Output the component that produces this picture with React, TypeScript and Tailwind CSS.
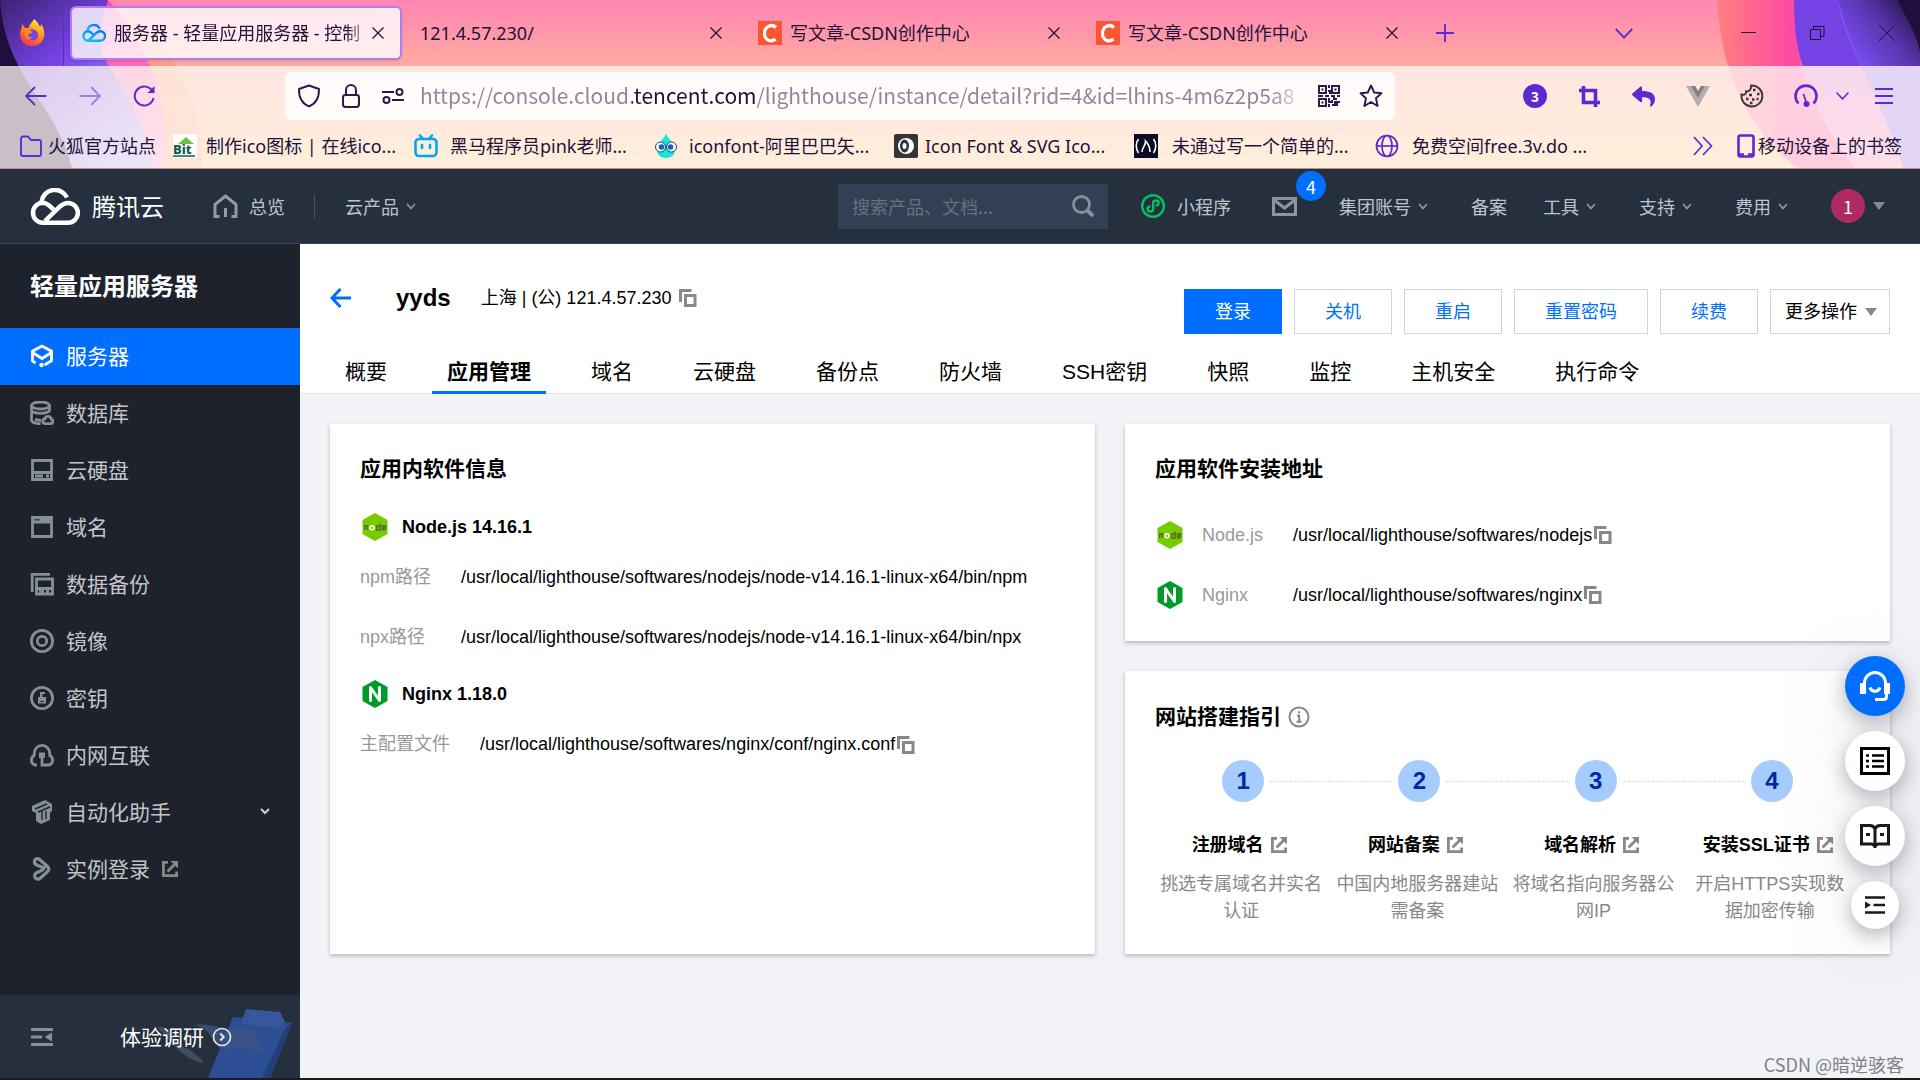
import { FaReply } from 'react-icons/fa';

const tabs = [
    { title: "121.4.57.230/", icon: false },
    { title: "写文章-CSDN创作中心", icon: true },
    { title: "写文章-CSDN创作中心", icon: true },
];

const headerMenus = [
    { name: "集团账号", arrow: true },
    { name: "备案", arrow: false },
    { name: "工具", arrow: true },
    { name: "支持", arrow: true },
    { name: "费用", arrow: true },
];

const detailTabs = ["概要", "应用管理", "域名", "云硬盘", "备份点", "防火墙", "SSH密钥", "快照", "监控", "主机安全", "执行命令"];

const steps = [
    { title: "注册域名", text: "挑选专属域名并实名认证" },
    { title: "网站备案", text: "中国内地服务器建站需备案" },
    { title: "域名解析", text: "将域名指向服务器公网IP" },
    { title: "安装SSL证书", text: "开启HTTPS实现数据加密传输" },
];

function CloseIcon() {
    return (
        <svg width="12" height="12" viewBox="0 0 12 12" fill="none" stroke="currentColor" strokeWidth="1.3">
            <path d="M.5.5l11 11M11.5.5l-11 11" />
        </svg>
    );
}

function Chevron() {
    return (
        <svg width="10" height="7" viewBox="0 0 10 7" fill="none" stroke="#8b9199" strokeWidth="1.7">
            <path d="M1 1l4 4.4L9 1" />
        </svg>
    );
}

function CloudLogo({ width, height, stroke, strokeWidth }: { width: number; height: number; stroke: string; strokeWidth: number }) {
    return (
        <svg width={width} height={height} viewBox="0 0 50 37" fill="none" stroke={stroke} strokeWidth={strokeWidth}>
            <defs>
                <linearGradient id="cloudBlue" x1="0" y1="1" x2="1" y2="0">
                    <stop offset="0" stopColor="#00d3ff" />
                    <stop offset=".6" stopColor="#0a93ff" />
                    <stop offset="1" stopColor="#006eff" />
                </linearGradient>
            </defs>
            <path d="M11.500 13.500A13.500 13.500 0 0 1 37 9.500" />
            <path d="M23.500 21.500C19.500 17.500 17 14.800 12 14.800a10 10 0 0 0 0 19.900h26a9.900 9.900 0 0 0 0-19.800c-3.800 0-6 1.600-8.500 4L15 33" />
        </svg>
    );
}

function CopyButton() {
    return (
        <button aria-label="复制" className="shrink-0">
            <svg width="18" height="18" viewBox="0 0 18 18" fill="none" stroke="#888" strokeWidth="3">
                <path d="M1.500 13V1.500H12.500" />
                <path d="M6.500 6.500h9.500v10H6.500z" />
            </svg>
        </button>
    );
}

function LinkOutIcon() {
    return (
        <svg width="16" height="16" viewBox="0 0 16 16" fill="none" stroke="#888" strokeWidth="2.800">
            <path d="M6 1.400H1.400v13.200h13.200V10.500" />
            <path d="M5.500 10.500L13 3" />
            <path d="M8.500 0H16v7.500z" fill="#888" stroke="none" />
        </svg>
    );
}

function NodeIcon() {
    return (
        <svg width="26" height="28" viewBox="0 0 26 28">
            <path d="M13 0l12.500 7v14L13 28 .5 21V7z" fill="#7c0" />
            <g fill="none" strokeWidth="1.500">
                <path d="M2.800 17v-4.200h2.700V17" stroke="#56682f" />
                <circle cx="10" cy="14.700" r="2" stroke="#fff" />
                <path d="M18 10.500V17h-3.400v-4H18M23.500 16.700h-3v-3.900h3V15h-3" stroke="#56682f" />
            </g>
        </svg>
    );
}

function NginxIcon() {
    return (
        <svg width="26" height="28" viewBox="0 0 26 28">
            <path d="M13 0l12.500 7v14L13 28 .5 21V7z" fill="#009a29" />
            <path d="M8.500 20.500v-13L17.500 20.500v-13" fill="none" stroke="#fff" strokeWidth="3" strokeLinecap="round" strokeLinejoin="round" />
        </svg>
    );
}

const gray = "#868e96";

const sideItems = [
    {
        name: "服务器",
        active: true,
        icon: (
            <g stroke="#fff" strokeWidth="2.800">
                <path d="M5.500 19L2.500 17V7.200L12 2l9.500 5.200v9.600L14.500 21" />
                <path d="M2.500 8.500l9.500 6 9.500-6" />
                <circle cx="11.500" cy="21" r="2.200" fill="#fff" stroke="none" />
            </g>
        ),
    },
    {
        name: "数据库",
        icon: (
            <g>
                <ellipse cx="10.500" cy="4.500" rx="9" ry="3.500" />
                <path d="M1.500 5v4c0 2 4 3.300 9 3.300s9-1.300 9-3.300V5" />
                <path d="M1.500 11v8c0 2 3.500 3.500 9 3.700M5 18.500l6 1" />
                <path d="M15 22.700h6c2.500-.5 2.500-4 .3-4.600-.8-3.600-5.600-3.600-6.300-.4-3 .6-3 4.600 0 5z" />
            </g>
        ),
    },
    { name: "云硬盘", icon: <path d="M2.500 2.500h19v19h-19zM2.500 14.500h19M5 18h8M16 18h3" /> },
    { name: "域名", icon: <path d="M2.500 2.500h19v19h-19zM2.500 5.500h2m2 0h1m2 0h12M2.500 7h19" /> },
    { name: "数据备份", icon: <path d="M2.200 20V2.300H20M6.500 7h16v15h-16zM6.500 16.500h16M9 19.500h5m2 0h3" /> },
    {
        name: "镜像",
        icon: (
            <g>
                <circle cx="12" cy="12" r="10.600" />
                <circle cx="12" cy="12" r="4.700" />
            </g>
        ),
    },
    {
        name: "密钥",
        icon: (
            <g>
                <circle cx="12" cy="12" r="10.600" />
                <path d="M8 11h8v6.500H8zM10 6h5v2h-2.500v4H10z" fill={gray} stroke="none" />
                <path d="M10.500 15.500h3" stroke="#1e222d" strokeWidth="1.200" />
            </g>
        ),
    },
    {
        name: "内网互联",
        icon: (
            <g>
                <path d="M7 22H5.500C1 21.500-.2 15 4.200 12.500 3 -1 21-1 19.800 12.500 24.200 15 23 21.500 18.500 22H12v-7" />
                <path d="M9 9.500h6v5.500H9z" fill={gray} stroke="none" />
            </g>
        ),
    },
    {
        name: "自动化助手",
        arrow: true,
        icon: (
            <g>
                <path d="M2 6L15 0l7 4v7l-2 1.500V20l-9 4-5-3v-8l-4-2z" fill={gray} stroke="none" />
                <path d="M5 9l12-5M8 12l12-5M12 11v9M16 11v8" stroke="#1e222d" strokeWidth="1.400" />
            </g>
        ),
    },
    {
        name: "实例登录",
        out: true,
        icon: (
            <path
                d="M15.500 11.500L8 8.500C2.500 7 4 0 9 2l8.500 7.500c2 2 1.500 4-.5 5.500l-6.500 6c-4 3.500-8-2-4.500-5l7.500-3.500"
                strokeWidth="3.200"
            />
        ),
    },
];

function BrowserBackdrop() {
    return (
        <div className="absolute inset-0 overflow-hidden bg-linear-to-b from-[#ff85b2] via-[#ffaaa0] via-40% to-[#ffcf90]">
            <svg className="absolute left-0 top-0" width="220" height="168" viewBox="0 0 220 168">
                <defs>
                    <linearGradient id="violetLeft" x1="0" y1="0" x2=".7" y2="1">
                        <stop offset="0" stopColor="#3b2370" />
                        <stop offset=".4" stopColor="#7542e5" />
                        <stop offset="1" stopColor="#b0a0ff" />
                    </linearGradient>
                    <linearGradient id="magentaLeft" x1="0" y1="0" x2="0" y2="1">
                        <stop offset="0" stopColor="#ff4aa2" />
                        <stop offset="1" stopColor="#ff9ad8" />
                    </linearGradient>
                </defs>
                <path d="M105 0c60 30 98 90 97 168H0V0z" fill="#ff9a70" opacity=".7" />
                <path d="M108 0c45 50 63 110 56 168H0V0z" fill="url(#magentaLeft)" />
                <path d="M58 0h50c-6 20-8 30-6 55 20 30 45 70 52 113H0V0z" fill="url(#violetLeft)" />
                <path d="M0 0c6 80 55 100 72 168H0z" fill="#1f0f3c" />
            </svg>
            <svg className="absolute right-0 top-0" width="260" height="168" viewBox="0 0 260 168">
                <defs>
                    <linearGradient id="magentaRight" x1="0" y1="0" x2=".6" y2="0">
                        <stop offset="0" stopColor="#ff7f80" />
                        <stop offset=".6" stopColor="#ff4aa2" />
                    </linearGradient>
                    <linearGradient id="peachFade" x1="0" y1="0" x2="0" y2="1">
                        <stop offset="0" stopColor="#c45ae8" stopOpacity=".9" />
                        <stop offset="1" stopColor="#ff8fc8" />
                    </linearGradient>
                    <linearGradient id="violetRight" x1=".1" y1=".7" x2="1" y2=".1">
                        <stop offset="0" stopColor="#7a4cf0" />
                        <stop offset=".5" stopColor="#5a35ad" />
                        <stop offset="1" stopColor="#20103d" />
                    </linearGradient>
                </defs>
                <path d="M57 0c4 60 20 120 80 168h123V0z" fill="url(#magentaRight)" />
                <path d="M134 0c0 70 20 110 60 168h66V0z" fill="url(#peachFade)" />
                <path d="M134 0c0 30 3 50 9 66h58L178 0z" fill="#7542e5" />
                <path d="M178 0c8 50 50 110 65 168h17V0z" fill="#8a66ff" />
                <path d="M178 0c6 24 14 45 23 66h59V0z" fill="url(#violetRight)" />
                <path d="M238 0c8 20 18 30 22 52V0z" fill="#1f0f3c" />
            </svg>
        </div>
    );
}

function TabStrip() {
    return (
        <div className="relative flex h-[66px] items-center text-lg text-[#20123a]">
            <div className="flex h-full w-16 shrink-0 items-center justify-center border-r border-[#5a30b0]">
                <svg width="26" height="28" viewBox="0 0 26 28">
                    <defs>
                        <linearGradient id="foxFire" x1=".8" y1="0" x2=".3" y2="1">
                            <stop offset="0" stopColor="#fff44f" />
                            <stop offset=".45" stopColor="#ff980e" />
                            <stop offset="1" stopColor="#ff2d55" />
                        </linearGradient>
                    </defs>
                    <path d="M15 0c4 3 5 6 6 8 1-1 1-2 1-3 6 8 4 22-9 22C4 27-1 19 2 10c1-1 1-3 1-5 1 1 2 2 3 4l4 0c0-4 3-5 5-9z" fill="url(#foxFire)" />
                    <path d="M9 12c4-3 10-1 10 4s-5 7-9 4c-3-2-2-5-1-8z" fill="#7542e5" />
                    <path d="M5 12c4-3 7 0 9 1-2 2-4 1-5 3 0 2 3 3 5 2-3 4-9 2-9-6z" fill="#ff8a16" />
                </svg>
            </div>
            <div className="ml-1.5 flex h-[54px] w-[332px] shrink-0 items-center rounded-md border-2 border-[#b07cf5] bg-white/80 px-2.5 shadow">
                <CloudLogo width={24} height={18} stroke="url(#cloudBlue)" strokeWidth={5} />
                <span className="ml-2 flex-1 whitespace-nowrap mask-r-from-90%">服务器 - 轻量应用服务器 - 控制</span>
                <button aria-label="关闭标签页" className="mr-1.5"><CloseIcon /></button>
            </div>
            {tabs.map((tab, index) => (
                <div key={index} className="ml-1.5 flex w-[332px] shrink-0 items-center px-3">
                    {tab.icon && (
                        <svg className="mr-2" width="24" height="24" viewBox="0 0 24 24">
                            <path d="M0 0h24v24H0z" fill="#fc5531" />
                            <path d="M18 6.500C13 2 6.500 6 6.500 12.500S13 22 17.500 18" fill="none" stroke="#fff" strokeWidth="3.200" />
                        </svg>
                    )}
                    <span className="flex-1 whitespace-nowrap">{tab.title}</span>
                    <button aria-label="关闭标签页" className="mr-1.5"><CloseIcon /></button>
                </div>
            ))}
            <button aria-label="新标签页" className="ml-5">
                <svg width="18" height="18" viewBox="0 0 18 18" stroke="#5b2ad0" strokeWidth="1.800"><path d="M9 0v18M0 9h18" /></svg>
            </button>
            <div className="ml-auto flex items-center pr-[25px]">
                <button aria-label="列出标签页" className="mr-[108px]">
                    <svg width="18" height="11" viewBox="0 0 18 11" fill="none" stroke="#5b2ad0" strokeWidth="1.800"><path d="M.7 1L9 9.500 17.300 1" /></svg>
                </button>
                <button aria-label="最小化" className="mr-[54px]">
                    <svg width="15" height="16" viewBox="0 0 15 16" stroke="currentColor"><path d="M0 7.500h15" /></svg>
                </button>
                <button aria-label="还原" className="mr-[54px]">
                    <svg width="15" height="16" viewBox="0 0 15 16" fill="none" stroke="currentColor"><path d="M.5 4.500h10v10H.5zM3.500 4V1.500h10.500v10h-3" /></svg>
                </button>
                <button aria-label="关闭">
                    <svg width="16" height="16" viewBox="0 0 16 16" stroke="currentColor"><path d="M0 0l16 16M16 0L0 16" /></svg>
                </button>
            </div>
        </div>
    );
}

function Toolbar() {
    return (
        <div className="flex h-[60px] items-center text-[#5b2ad0]">
            <div className="flex w-[285px] shrink-0 items-center gap-8 pl-[25px]">
                <button aria-label="后退">
                    <svg width="22" height="20" viewBox="0 0 22 20" fill="none" stroke="currentColor" strokeWidth="1.900"><path d="M21.500 10H1.500M10 1L1 10l9 9" /></svg>
                </button>
                <button aria-label="前进" className="opacity-50">
                    <svg width="22" height="20" viewBox="0 0 22 20" fill="none" stroke="currentColor" strokeWidth="1.900"><path d="M.5 10h20M12 1l9 9-9 9" /></svg>
                </button>
                <button aria-label="刷新">
                    <svg width="23" height="22" viewBox="0 0 23 22" fill="none" stroke="currentColor" strokeWidth="2"><path d="M20.500 13A9.500 9.500 0 1 1 19 5.500" /><path d="M21.500 1v7h-7z" fill="currentColor" stroke="none" /></svg>
                </button>
            </div>
            <div className="flex h-12 w-[1110px] items-center rounded-md bg-white/85 px-3 text-[#2b1a4a]">
                <svg width="24" height="24" viewBox="0 0 24 24" fill="none" stroke="currentColor" strokeWidth="1.900"><path d="M12 1.500l10 3.500c.3 8-3 14.500-10 17.500C5 19.500 1.700 13 2 5z" strokeLinejoin="round" /></svg>
                <svg className="ml-[21px]" width="18" height="24" viewBox="0 0 18 24" fill="none" stroke="currentColor" strokeWidth="2"><rect x="1" y="11" width="16" height="12" rx="2.500" /><path d="M4 11V6a5 5 0 0 1 10 0v5" /></svg>
                <svg className="ml-[21px]" width="24" height="18" viewBox="0 0 24 18" fill="none" stroke="currentColor" strokeWidth="2"><path d="M1 5h12M11 13h12" /><circle cx="18.500" cy="5" r="3" /><circle cx="5.500" cy="13" r="3" /></svg>
                <input
                    aria-label="地址栏"
                    readOnly
                    value="https://console.cloud.tencent.com/lighthouse/instance/detail?rid=4&id=lhins-4m6z2p5a8"
                    className="ml-[15px] w-[888px] bg-[linear-gradient(90deg,#8f859e_212px,#20123a_212px,#20123a_336px,#8f859e_336px,#8f859e_850px,transparent_888px)] bg-clip-text pb-0.5 text-[21px] leading-8 text-transparent outline-none"
                />
                <svg className="ml-[11px]" width="22" height="22" viewBox="0 0 22 22" fill="none" stroke="currentColor" strokeWidth="2">
                    <path d="M1 1h7v7H1zM14 1h7v7h-7zM1 14h7v7H1z" />
                    <path d="M3.500 4.500h2M16.500 4.500h2M3.500 17.500h2M11 0v3M10 6h2v3M0 11h5M7 11h4M13 11h3v3h3M19 11h3M11 13v4h3v-2M11 19v3M14 20h3v-3h2v4M20 17h2" />
                </svg>
                <svg className="ml-[19px]" width="24" height="24" viewBox="0 0 24 24" fill="none" stroke="currentColor" strokeWidth="1.900" strokeLinejoin="round"><path d="M12 1.500l3.200 7 7.300.8-5.500 5 1.600 7.700L12 18l-6.600 4L7 14.300l-5.500-5 7.300-.8z" /></svg>
            </div>
            <div className="ml-auto flex items-center pr-[27px]">
                <span className="flex size-6 items-center justify-center rounded-full bg-[#5b2ad0] text-sm font-bold text-white">3</span>
                <svg className="ml-8" width="21" height="21" viewBox="0 0 21 21" fill="none" stroke="currentColor" strokeWidth="3.600"><path d="M0 4.500h16.500V21M4.500 0v16.500H21" /></svg>
                <FaReply className="ml-8" size={23} />
                <svg className="ml-[31px]" width="24" height="21" viewBox="0 0 24 21"><path d="M0 0h9l3 5 3-5h9L12 21z" fill="#b5b0b0" /><path d="M5 0h4l3 5 3-5h4l-7 12z" fill="#858080" /></svg>
                <svg className="ml-[30px]" width="24" height="24" viewBox="0 0 24 24" fill="none" stroke="#3b3632" strokeWidth="1.900">
                    <path d="M11 1.500a10.500 10.500 0 1 1-9.500 9c3 1 5-.5 4.500-3 3 .5 5.500-2 5-6z" />
                    <path d="M13 6h2.500M17 10h2.500M9 11h3M6 15h2.500M12 15.500h2.500M16.500 15h2M10 19h2.500" strokeWidth="2.600" />
                </svg>
                <svg className="ml-[30px]" width="24" height="24" viewBox="0 0 24 24" fill="none" stroke="currentColor" strokeWidth="2.600"><path d="M4.500 19.500A10.500 10.500 0 1 1 19.500 19.500" /><path d="M9.500 10l3 9" strokeWidth="1.700" /><circle cx="12.500" cy="20" r="3" fill="currentColor" stroke="none" /></svg>
                <svg className="ml-[18px]" width="13" height="8" viewBox="0 0 13 8" fill="none" stroke="currentColor" strokeWidth="1.500"><path d="M.5.5l6 6.300 6-6.300" /></svg>
                <button aria-label="菜单" className="ml-[26px]">
                    <svg width="18" height="16" viewBox="0 0 18 16" stroke="currentColor" strokeWidth="2"><path d="M0 1h18M0 8h18M0 15h18" /></svg>
                </button>
            </div>
        </div>
    );
}

const bookmarks = [
    {
        name: "火狐官方站点",
        width: "w-[154px]",
        gap: "gap-[5px]",
        icon: <path d="M2 4.500a2 2 0 0 1 2-2h5l3 3.500h8a2 2 0 0 1 2 2v12a2 2 0 0 1-2 2H4a2 2 0 0 1-2-2z" fill="none" stroke="#5b2ad0" strokeWidth="1.900" />,
    },
    {
        name: "制作ico图标 | 在线ico...",
        width: "w-[241px]",
        gap: "gap-[9px]",
        icon: (
            <g>
                <path d="M0 0h24v24H0z" fill="#fff" />
                <path d="M5 10l8-7 8 7z" fill="#6cc04a" />
                <text x="0" y="20" fontSize="13" fontWeight="800" fill="#0a5c48">Bit</text>
                <path d="M0 22h22" stroke="#0a5c48" strokeWidth="1.500" />
            </g>
        ),
    },
    {
        name: "黑马程序员pink老师...",
        width: "w-[240px]",
        gap: "gap-3",
        icon: (
            <g fill="none" stroke="#00a8e8" strokeWidth="2.600" strokeLinecap="round">
                <rect x="1.500" y="5" width="21" height="17" rx="3.500" />
                <path d="M6 1.500L9 5M18 1.500L15 5M8 11v3M16 11v3" />
            </g>
        ),
    },
    {
        name: "iconfont-阿里巴巴矢...",
        width: "w-[240px]",
        gap: "gap-[11px]",
        icon: (
            <g>
                <path d="M12 0c4 7 9 10 9 16 0 5-4 8-9 8s-9-3-9-8c0-6 5-9 9-16z" fill="#14e6dc" />
                <circle cx="6.500" cy="13" r="5" fill="#fff" stroke="#246" />
                <circle cx="17.500" cy="13" r="5" fill="#fff" stroke="#246" />
                <circle cx="7.500" cy="13" r="2.800" fill="#1560c0" />
                <circle cx="16.500" cy="13" r="2.800" fill="#1560c0" />
            </g>
        ),
    },
    {
        name: "Icon Font & SVG Ico...",
        width: "w-[240px]",
        gap: "gap-[7px]",
        icon: (
            <g>
                <rect width="24" height="24" rx="2" fill="#353535" />
                <circle cx="12" cy="12" r="8" fill="#fff" />
                <ellipse cx="10.500" cy="12" rx="4.500" ry="6.500" fill="#353535" />
                <ellipse cx="10.500" cy="12" rx="2" ry="3" fill="#fff" />
            </g>
        ),
    },
    {
        name: "未通过写一个简单的...",
        width: "w-[241px]",
        gap: "gap-3.5",
        icon: (
            <g fill="none" stroke="#fff" strokeWidth="1.600">
                <path d="M0 0h24v24H0z" fill="#0a0a23" stroke="none" />
                <path d="M4.500 5C1.500 9 1.500 15 4.500 19M19.500 5c3 4 3 10 0 14M8 18c0-5 4-6 3.500-11 3 3 4.500 7 4.500 11" />
            </g>
        ),
    },
    {
        name: "免费空间free.3v.do ...",
        width: "w-[240px]",
        gap: "gap-[13px]",
        icon: (
            <g fill="none" stroke="#5b2ad0" strokeWidth="1.700">
                <circle cx="12" cy="12" r="10.500" />
                <ellipse cx="12" cy="12" rx="5" ry="10.500" />
                <path d="M1.500 12h21" />
            </g>
        ),
    },
];

function BookmarkBar() {
    return (
        <nav aria-label="书签" className="flex h-[42px] items-center pb-0.5 pl-[19px] text-lg text-[#20123a]">
            {bookmarks.map((mark) => (
                <a key={mark.name} href="#" className={`flex shrink-0 items-center whitespace-nowrap ${mark.width} ${mark.gap}`}>
                    <svg className="shrink-0" width="24" height="24" viewBox="0 0 24 24">{mark.icon}</svg>
                    {mark.name}
                </a>
            ))}
            <div className="ml-auto flex items-center pr-[18px]">
                <button aria-label="更多书签" className="mr-6">
                    <svg width="20" height="20" viewBox="0 0 20 20" fill="none" stroke="#5b2ad0" strokeWidth="1.700"><path d="M1 1l8 9-8 9M10 1l8.500 9L10 19" /></svg>
                </button>
                <a href="#" className="flex items-center gap-[3px] whitespace-nowrap">
                    <svg width="18" height="24" viewBox="0 0 18 24" fill="none" stroke="#5b2ad0" strokeWidth="2.600"><rect x="1.500" y="1.500" width="15" height="21" rx="2" /><path d="M1 20.500h6M11 20.500h6" /></svg>
                    移动设备上的书签
                </a>
            </div>
        </nav>
    );
}

function ConsoleHeader() {
    return (
        <header className="flex h-[75px] shrink-0 items-center border-b border-[#36435c] bg-[#262f3e] text-lg whitespace-nowrap text-[#c0c4ca]">
            <a href="#" className="ml-[30px] flex items-center gap-3 text-2xl text-white">
                <CloudLogo width={50} height={37} stroke="#fff" strokeWidth={4.500} />
                腾讯云
            </a>
            <a href="#" className="ml-[49px] flex items-center gap-[11px]">
                <svg width="25" height="24" viewBox="0 0 25 24" fill="none" stroke="#929aa2" strokeWidth="3"><path d="M6.500 22.500H2V10.500L12.500 2 23 10.500v12h-4.500M12.500 14v9" /></svg>
                总览
            </a>
            <span className="ml-[29px] h-6 w-px bg-[#4a5464]" />
            <button className="ml-[30px] flex items-center gap-[7px]">云产品 <Chevron /></button>
            <div className="ml-auto flex h-[45px] w-[270px] items-center bg-[#333f55] px-3.5">
                <input type="search" aria-label="搜索" placeholder="搜索产品、文档..." className="min-w-0 flex-1 bg-transparent outline-none placeholder:text-[#6a7179]" />
                <svg width="22" height="22" viewBox="0 0 22 22" fill="none" stroke="#87919a" strokeWidth="2.800"><circle cx="9.500" cy="9.500" r="8" /><path d="M15 15l6 6" strokeWidth="4" /></svg>
            </div>
            <a href="#" className="ml-[33px] flex items-center gap-3">
                <svg width="24" height="24" viewBox="0 0 24 24" fill="none" stroke="#07c160" strokeWidth="2.400"><circle cx="12" cy="12" r="10.800" /><path d="M9.500 12.500c-4 0-4 5 0 5 1.500 0 2.700-1 2.700-2.500V9c0-1.500 1-2.500 2.500-2.500 4 0 4 5 0 5" /></svg>
                小程序
            </a>
            <button aria-label="站内信" className="relative ml-[41px]">
                <svg width="25" height="19" viewBox="0 0 25 19" fill="none" stroke="#8d959b" strokeWidth="3"><path d="M1.500 1.500h22v16h-22zM1.500 2.500l11 8.500L23.500 2.500" /></svg>
                <span className="absolute -top-[26px] left-6 flex size-[30px] items-center justify-center rounded-full bg-[#006eff] text-white">4</span>
            </button>
            <nav className="ml-[42px] flex items-center">
                {headerMenus.map((menu) => (
                    <button key={menu.name} className="mr-9 flex items-center gap-[7px]">
                        {menu.name}
                        {menu.arrow && <span className="mr-[7px]"><Chevron /></span>}
                    </button>
                ))}
            </nav>
            <button className="mr-[35px] flex items-center gap-2">
                <span className="flex size-[34px] items-center justify-center rounded-full bg-[#b02a62] text-white">1</span>
                <svg width="12" height="8" viewBox="0 0 12 8"><path d="M0 0h12L6 8z" fill="#888" /></svg>
            </button>
        </header>
    );
}

function Sidebar() {
    return (
        <aside className="flex w-[300px] shrink-0 flex-col bg-[#1e222d]">
            <h2 className="flex h-21 items-center px-[30px] pb-0.5 text-2xl font-bold text-white">轻量应用服务器</h2>
            <nav>
                {sideItems.map((item) => (
                    <a
                        key={item.name}
                        href="#"
                        className={`flex h-[57px] items-center px-[30px] pb-0.5 text-[21px] ${item.active ? "bg-[#006eff] text-white" : "text-[#c3c5c9]"}`}
                    >
                        <svg className="mr-3" width="24" height="24" viewBox="0 0 24 24" fill="none" stroke={gray} strokeWidth="2.800">{item.icon}</svg>
                        {item.name}
                        {item.out && <span className="ml-3"><LinkOutIcon /></span>}
                        {item.arrow && (
                            <svg className="ml-auto" width="10" height="7" viewBox="0 0 10 7" fill="none" stroke="#d0d3d8" strokeWidth="2"><path d="M1 1l4 4 4-4" /></svg>
                        )}
                    </a>
                ))}
            </nav>
            <div className="relative mt-auto flex h-[83px] items-center overflow-hidden bg-[#262f3e] pl-[30px]">
                <svg className="absolute right-0 bottom-0" width="150" height="70" viewBox="0 0 150 70">
                    <path d="M8 20c5-4 10 2 14 8s12 13 17 13l12 10 2 4C40 54 25 40 8 20z" fill="#414c60" />
                    <path d="M58 70L83 9l59 6L120 70z" fill="#2c4f93" />
                    <path d="M136 19l6-4-22 55h-8z" fill="#233f78" />
                    <path d="M96 1l34 3 5 10-8 6-36-4z" fill="#35589c" />
                    <path d="M43 17c15-3 32 6 50 4 20-4 10 22 29 21-18 1-28-3-42-1-20 3-14-22-37-24z" fill="#3c5286" opacity=".8" />
                </svg>
                <button aria-label="收起菜单">
                    <svg width="24" height="18" viewBox="0 0 24 18" stroke="#868e96" strokeWidth="3"><path d="M1 1.500h22M1 9h11M1 16.500h22" /><path d="M22 4.500v9L14.500 9z" fill="#868e96" stroke="none" /></svg>
                </button>
                <a href="#" className="relative ml-[66px] flex items-center gap-2 text-[21px] text-white">
                    体验调研
                    <svg width="20" height="20" viewBox="0 0 20 20" fill="none" stroke="#e8eaee" strokeWidth="1.600"><circle cx="10" cy="10" r="8.500" /><path d="M8.300 6.500l3.400 3.500-3.400 3.500" strokeWidth="2" /></svg>
                </a>
            </div>
        </aside>
    );
}

function InstanceHeader() {
    return (
        <div className="border-b border-[#e4e6ec] bg-white">
            <div className="flex items-center px-[30px] pt-[45px] text-lg">
                <button aria-label="返回" className="-mt-7 shrink-0">
                    <svg width="22" height="20" viewBox="0 0 22 20" fill="none" stroke="#006eff" strokeWidth="3"><path d="M21 10H3M10.500 1L2 10l8.500 9" /></svg>
                </button>
                <h1 className="-mt-7 ml-11 text-2xl font-bold">yyds</h1>
                <div className="-mt-7 ml-[30px] flex items-center gap-2">上海 | (公) 121.4.57.230 <CopyButton /></div>
                <div className="ml-auto flex gap-3 whitespace-nowrap">
                    <button className="h-[45px] bg-[#006eff] px-[31px] text-white">登录</button>
                    {["关机", "重启", "重置密码", "续费"].map((name) => (
                        <button key={name} className="h-[45px] border border-[#cfd5de] px-[30px] text-[#006eff]">{name}</button>
                    ))}
                    <button className="flex h-[45px] items-center gap-2 border border-[#cfd5de] pr-3 pl-3.5">
                        更多操作
                        <svg width="12" height="8" viewBox="0 0 12 8"><path d="M0 0h12L6 8z" fill="#888" /></svg>
                    </button>
                </div>
            </div>
            <div role="tablist" className="mt-4 -mb-px flex gap-[30px] px-[30px] text-[21px]">
                {detailTabs.map((name) => (
                    <button
                        key={name}
                        role="tab"
                        aria-selected={name === "应用管理"}
                        className={`h-11 border-b-3 px-[15px] pt-1 whitespace-nowrap ${name === "应用管理" ? "border-[#006eff] font-bold" : "border-transparent"}`}
                    >
                        {name}
                    </button>
                ))}
            </div>
        </div>
    );
}

function SoftwareInfo() {
    return (
        <section className="row-span-2 bg-white px-[30px] pt-[31px] pb-[30px] shadow-[0_2px_4px_#363a5052]">
            <h2 className="text-[21px] leading-7 font-bold">应用内软件信息</h2>
            <h3 className="mt-[30px] flex items-center gap-3.5 pl-0.5 font-bold"><NodeIcon /> Node.js 14.16.1</h3>
            <dl className="mt-[23px] grid grid-cols-[101px_1fr] gap-y-[33px] leading-[27px]">
                <dt className="text-[#999]">npm路径</dt>
                <dd>/usr/local/lighthouse/softwares/nodejs/node-v14.16.1-linux-x64/bin/npm</dd>
                <dt className="text-[#999]">npx路径</dt>
                <dd>/usr/local/lighthouse/softwares/nodejs/node-v14.16.1-linux-x64/bin/npx</dd>
            </dl>
            <h3 className="mt-[29px] flex items-center gap-3.5 pl-0.5 font-bold"><NginxIcon /> Nginx 1.18.0</h3>
            <dl className="mt-[23px] grid grid-cols-[120px_1fr] leading-[27px]">
                <dt className="text-[#999]">主配置文件</dt>
                <dd className="flex items-center gap-0.5">/usr/local/lighthouse/softwares/nginx/conf/nginx.conf<CopyButton /></dd>
            </dl>
        </section>
    );
}

function InstallPaths() {
    return (
        <section className="bg-white px-[30px] pt-[31px] pb-8 shadow-[0_2px_4px_#363a5052]">
            <h2 className="text-[21px] leading-7 font-bold">应用软件安装地址</h2>
            <dl className="mt-[38px] grid grid-cols-[138px_1fr] gap-y-8 leading-7">
                <dt className="flex items-center gap-[19px] pl-0.5 text-[#999]"><NodeIcon /> Node.js</dt>
                <dd className="flex items-center gap-0.5">/usr/local/lighthouse/softwares/nodejs<CopyButton /></dd>
                <dt className="flex items-center gap-[19px] pl-0.5 text-[#999]"><NginxIcon /> Nginx</dt>
                <dd className="flex items-center gap-0.5">/usr/local/lighthouse/softwares/nginx<CopyButton /></dd>
            </dl>
        </section>
    );
}

function SiteGuide() {
    return (
        <section className="bg-white px-[30px] pt-8 pb-[29px] shadow-[0_2px_4px_#363a5052]">
            <h2 className="flex items-center gap-[7px] text-[21px] leading-7 font-bold">
                网站搭建指引
                <svg width="22" height="22" viewBox="0 0 22 22" fill="none" stroke="#888" strokeWidth="2"><circle cx="11" cy="11" r="9.500" /><path d="M9 9.500h2.200V15.500M8.500 15.700h5M10 6.300h2.200" /></svg>
            </h2>
            <ol className="mt-[29px] grid grid-cols-4 text-center">
                {steps.map((step, index) => (
                    <li key={step.title}>
                        <div className="flex items-center gap-1.5">
                            <span className={`flex-1 border-t border-dashed ${index === 0 ? "border-transparent" : "border-[#dcdfe5]"}`} />
                            <span className="flex size-[42px] items-center justify-center rounded-full bg-[#a6cbff] text-2xl font-bold text-[#0028a0]">{index + 1}</span>
                            <span className={`flex-1 border-t border-dashed ${index === 3 ? "border-transparent" : "border-[#dcdfe5]"}`} />
                        </div>
                        <a href="#" className="mt-[29px] flex items-center justify-center gap-[7px] pr-2 leading-7 font-bold whitespace-nowrap">{step.title}<LinkOutIcon /></a>
                        <p className="mt-3 pr-2 pl-1 leading-[27px] text-[#888]">{step.text}</p>
                    </li>
                ))}
            </ol>
        </section>
    );
}

function FloatingTools() {
    return (
        <div className="fixed right-[15px] bottom-[151px] flex flex-col items-center gap-[15px] *:flex *:items-center *:justify-center *:rounded-full *:shadow-[0_6px_20px_#363a5060,0_20px_90px_#363a5022]">
            <button aria-label="客服" className="size-[60px] bg-[#006eff]">
                <svg width="30" height="30" viewBox="0 0 30 30" fill="none" stroke="#fff" strokeWidth="3"><path d="M4.500 14v-2a10.500 10.500 0 0 1 21 0v2M26.500 21v4.500c0 2-1 3-3 3H15" /><path d="M0 12h6v11H0zM24 12h6v11h-6z" fill="#fff" stroke="none" /><path d="M10 16.500c1.500 5 8.500 5 10 0" /></svg>
            </button>
            <button aria-label="清单" className="size-[60px] bg-white">
                <svg width="30" height="28" viewBox="0 0 30 28" fill="none" stroke="#000" strokeWidth="3"><path d="M1.500 1.500h27v25h-27z" /><path d="M6 8.500h3M12 8.500h12M6 14h3M12 14h12M6 19.500h3M12 19.500h12" strokeWidth="2.500" /></svg>
            </button>
            <button aria-label="文档" className="size-[60px] bg-white">
                <svg width="30" height="25" viewBox="0 0 30 25" fill="none" stroke="#1a1a1a" strokeWidth="3"><path d="M15 24V5c-1-2.500-3-3.500-5-3.500H1.500v18.500H12l3 2 3-2h10.500V1.500H20c-2 0-4 1-5 3.500M6 10.500h4M20 10.500h4" /></svg>
            </button>
            <button aria-label="收起" className="size-12 bg-white">
                <svg width="20" height="18" viewBox="0 0 20 18" fill="none" stroke="#1a1a1a" strokeWidth="2.400"><path d="M0 1.500h20M8.500 9H20M0 16.500h20" /><path d="M0 5.500v7L6 9z" fill="#1a1a1a" stroke="none" /></svg>
            </button>
        </div>
    );
}

export default function App() {
    return (
        <div className="flex min-h-screen flex-col border-b-2 border-[#1c1a1d] font-['Noto_Sans_CJK_SC',sans-serif]">
            <div className="relative border-b border-[#c09080]">
                <BrowserBackdrop />
                <div className="font-['Noto_Sans','Noto_Sans_CJK_SC',sans-serif]">
                    <TabStrip />
                </div>
                <div className="relative bg-[#fff9f3]/76">
                    <Toolbar />
                    <div className="font-['Noto_Sans','Noto_Sans_CJK_SC',sans-serif]">
                        <BookmarkBar />
                    </div>
                </div>
            </div>
            <ConsoleHeader />
            <div className="flex flex-1">
                <Sidebar />
                <main className="relative min-w-0 flex-1 bg-[#f2f3f7] font-['Liberation_Sans','Noto_Sans_CJK_SC',sans-serif] text-lg text-black">
                    <InstanceHeader />
                    <div className="grid grid-cols-2 gap-[30px] p-[30px]">
                        <SoftwareInfo />
                        <InstallPaths />
                        <SiteGuide />
                    </div>
                    <p className="absolute right-4 bottom-0 font-['Noto_Sans_CJK_SC',sans-serif] text-[#808186]">CSDN @暗逆骇客</p>
                </main>
            </div>
            <FloatingTools />
        </div>
    );
}
